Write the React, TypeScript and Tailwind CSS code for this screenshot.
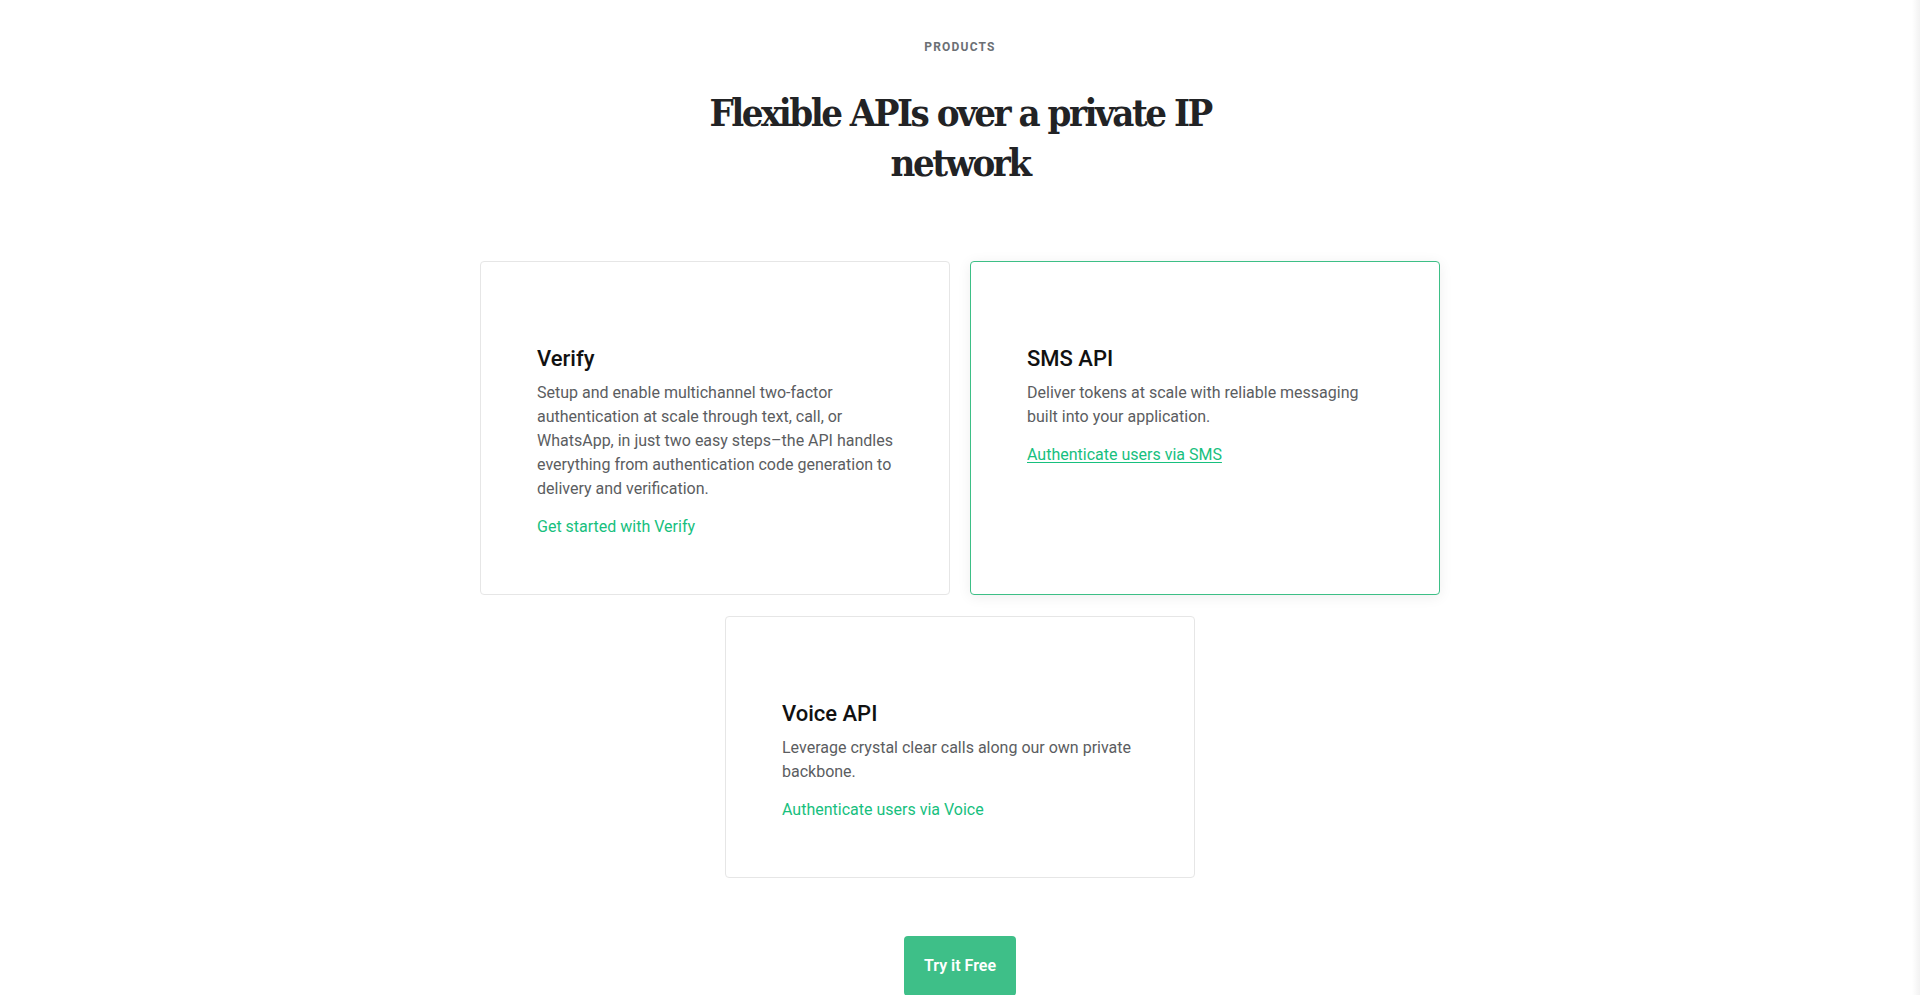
const products = [
  {
    title: 'Verify',
    text: 'Setup and enable multichannel two-factor authentication at scale through text, call, or WhatsApp, in just two easy steps\u2013the API handles everything from authentication code generation to delivery and verification.',
    link: 'Get started with Verify',
    active: false,
  },
  {
    title: 'SMS API',
    text: 'Deliver tokens at scale with reliable messaging built into your application.',
    link: 'Authenticate users via SMS',
    active: true,
  },
  {
    title: 'Voice API',
    text: 'Leverage crystal clear calls along our own private backbone.',
    link: 'Authenticate users via Voice',
    active: false,
  },
];

const ProductCard = ({ item }: { item: (typeof products)[number] }) => (
  <div
    className={`w-[470px] rounded-[4px] border bg-white px-14 pt-[83px] pb-[55px] ${
      item.active
        ? 'border-[#3dbf86] shadow-[0_2px_14px_rgba(0,0,0,0.07)]'
        : 'border-[#e6e6e6]'
    }`}
  >
    <h3 className="text-[22px] leading-[28px] font-medium text-[#111111]">{item.title}</h3>
    <p className="mt-[8px] text-[16px] leading-[24px] text-[#5b5d61]">{item.text}</p>
    <a
      href="#"
      className={`mt-[14px] inline-block text-[16px] leading-[24px] text-[#17c07e] ${
        item.active ? 'underline underline-offset-[2px]' : ''
      }`}
    >
      {item.link}
    </a>
  </div>
);

export default function App() {
  return (
    <div className="relative min-h-screen overflow-hidden bg-white font-['Roboto',sans-serif]">
      <section className="flex flex-col items-center pt-[38px]">
        <p className="text-[12px] leading-[18px] font-bold tracking-[1.2px] text-[#6b6f74]">PRODUCTS</p>
        <h2 className="mt-[32px] text-center font-['DejaVu_Serif',serif] text-[38px] leading-[50px] font-bold tracking-[-2.5px] whitespace-nowrap text-[#222325] font-stretch-condensed">
          Flexible APIs over a private IP
          <br />
          network
        </h2>

        <div className="mt-[73px] flex w-[960px] flex-wrap justify-center gap-x-5 gap-y-[21px]">
          {products.map(item => (
            <ProductCard key={item.title} item={item} />
          ))}
        </div>

        <button className="mt-[58px] h-[60px] rounded-[4px] bg-[#3ebf88] px-5 text-[16px] font-semibold text-white">
          Try it Free
        </button>
      </section>

      <div className="fixed top-0 right-0 h-full w-2 bg-gradient-to-r from-white to-[#f2f2f2]" />
    </div>
  );
}
